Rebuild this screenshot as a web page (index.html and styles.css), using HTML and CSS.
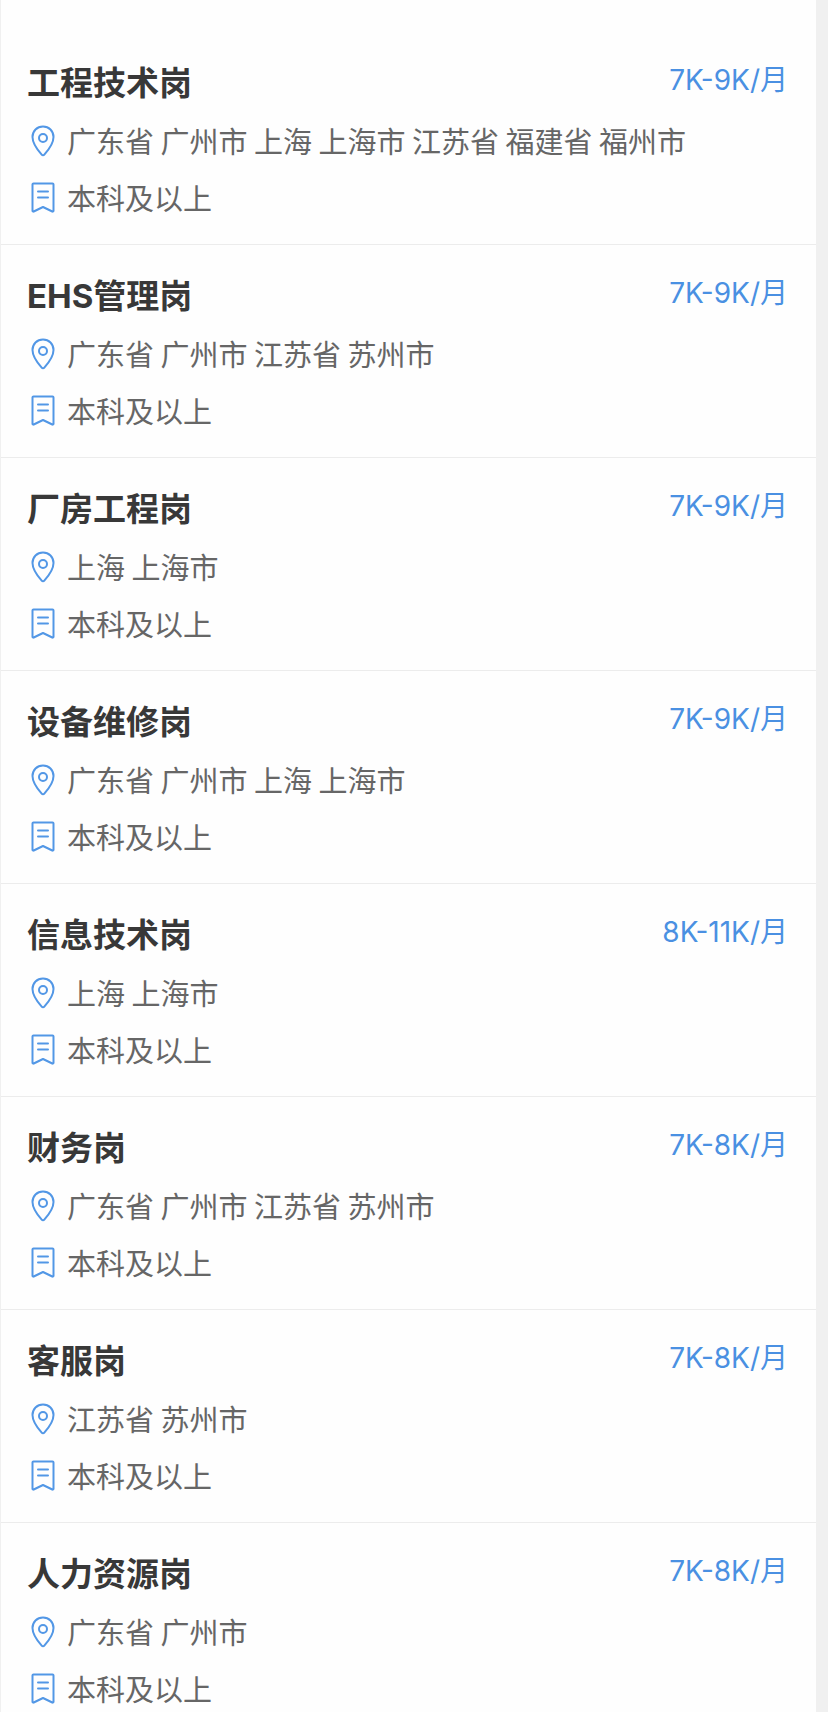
FILE: index.html
```html
<!DOCTYPE html>
<html lang="zh-CN">
<head>
    <meta charset="UTF-8">
    <meta name="viewport" content="width=device-width, initial-scale=1.0">
    <title>职位列表</title>
    <link rel="stylesheet" href="styles.css">
</head>
<body>
    <!-- Shared icons -->
    <svg class="icon-defs" aria-hidden="true">
        <symbol id="icon-pin" viewBox="0 0 24 32">
            <path d="M12 1.5C6 1.5 1.5 6 1.5 12c0 6.500 5.500 13.500 9.200 17.700a1.700 1.700 0 0 0 2.600 0C17 25.500 22.500 18.500 22.500 12 22.500 6 18 1.500 12 1.500z"/>
            <circle cx="12" cy="13" r="4"/>
        </symbol>
        <symbol id="icon-degree" viewBox="0 0 24 32">
            <path d="M2.500 1.500h19a1 1 0 0 1 1 1v26.300a.8.8 0 0 1-1.200.7L12 25l-9.300 4.500a.8.8 0 0 1-1.200-.7V2.500a1 1 0 0 1 1-1z"/>
            <path d="M7 9.500h10M7 15.500h10"/>
        </symbol>
    </svg>

    <main class="page">
        <ul class="job-list" id="jobList"></ul>
    </main>

    <script src="script.js"></script>
</body>
</html>
```
FILE: styles.css
```css
* {
    box-sizing: border-box;
}

body {
    margin: 0;
    background-color: #f0f0f0;
    font-family: Inter, "Noto Sans CJK SC", sans-serif;
    color: #666;
}

.icon-defs {
    display: none;
}

.page {
    height: 100vh;
    margin-right: 12px;
    padding-top: 32px;
    overflow: hidden;
    background-color: #fefefe;
    border-left: 1px solid #f0f0f0;
}

.job-list {
    list-style: none;
    margin: 0;
    padding: 0;
}

.job {
    padding: 28px 28px 18px 26px;
    border-bottom: 1px solid #ececec;
}

.job-header {
    display: flex;
    justify-content: space-between;
    margin-bottom: 6px;
}

.job-title {
    margin: 0;
    font-size: 33px;
    line-height: 46px;
    font-weight: 700;
    color: #383838;
}

.job-salary {
    font-size: 28px;
    line-height: 40px;
    color: #4a90e2;
}

.job-info {
    display: flex;
    align-items: center;
    gap: 12px;
    margin: 0;
    font-family: "Noto Sans CJK SC", sans-serif;
    font-size: 29px;
    line-height: 57px;
}

.icon {
    width: 24px;
    height: 32px;
    margin-left: 4px;
    fill: none;
    stroke: #5297e6;
    stroke-width: 2;
    stroke-linecap: round;
    stroke-linejoin: round;
}
```
FILE: script.js
```javascript
const jobs = [
    { title: '工程技术岗', salary: '7K-9K/月', place: '广东省 广州市 上海 上海市 江苏省 福建省 福州市' },
    { title: 'EHS管理岗', salary: '7K-9K/月', place: '广东省 广州市 江苏省 苏州市' },
    { title: '厂房工程岗', salary: '7K-9K/月', place: '上海 上海市' },
    { title: '设备维修岗', salary: '7K-9K/月', place: '广东省 广州市 上海 上海市' },
    { title: '信息技术岗', salary: '8K-11K/月', place: '上海 上海市' },
    { title: '财务岗', salary: '7K-8K/月', place: '广东省 广州市 江苏省 苏州市' },
    { title: '客服岗', salary: '7K-8K/月', place: '江苏省 苏州市' },
    { title: '人力资源岗', salary: '7K-8K/月', place: '广东省 广州市' }
];

// Every job asks for the same degree
const degree = '本科及以上';

function infoRow(icon, text) {
    return `
        <p class="job-info">
            <svg class="icon" aria-hidden="true"><use href="#${icon}"></use></svg>
            <span>${text}</span>
        </p>`;
}

document.getElementById('jobList').innerHTML = jobs.map(job => `
    <li class="job">
        <div class="job-header">
            <h2 class="job-title">${job.title}</h2>
            <span class="job-salary">${job.salary}</span>
        </div>
        ${infoRow('icon-pin', job.place)}
        ${infoRow('icon-degree', degree)}
    </li>`).join('');
```
